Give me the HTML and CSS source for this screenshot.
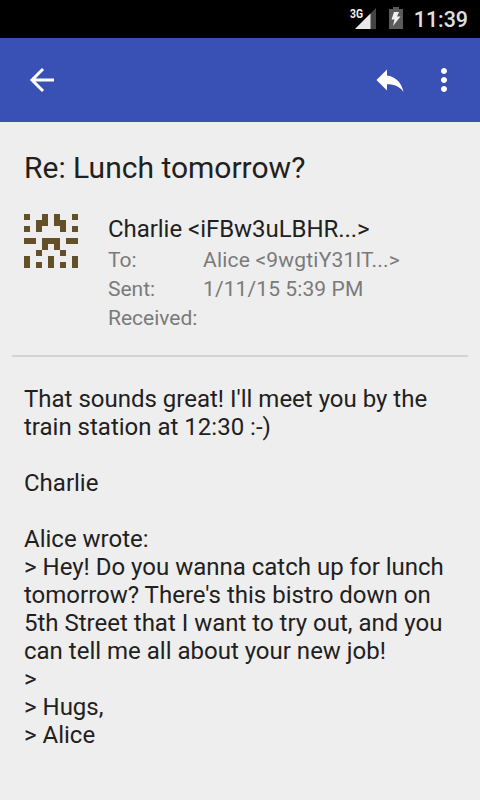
FILE: index.html
```html
<!DOCTYPE html>
<html lang="en">
<head>
    <meta charset="UTF-8">
    <meta name="viewport" content="width=device-width, initial-scale=1.0">
    <title>Re: Lunch tomorrow?</title>
    <link rel="stylesheet" href="styles.css">
</head>
<body>
    <div class="status-bar">
        <svg class="signal" width="28" height="24" viewBox="0 0 28 24">
            <path d="M27 1V22H6z" fill="#444"/>
            <path d="M21.500 6.500V22H6z" fill="#e8e8e8"/>
            <text class="network" x="1" y="11" textLength="13" lengthAdjust="spacingAndGlyphs">3G</text>
        </svg>
        <svg class="battery" width="14" height="22" viewBox="0 0 14 22">
            <path d="M4 0h6v2h4v20H0V2h4z" fill="#5a5a5a"/>
            <path d="M5 5h5L8 9.500h3.500L4 19l1.500-6.500H2.500z" fill="#f0f0f0"/>
        </svg>
        <span class="clock">11:39</span>
    </div>
    <header class="toolbar">
        <svg class="back" width="36" height="36" viewBox="0 0 36 36">
            <path d="M31 18H10M20 7L9 18l11 11" fill="none" stroke="#fff" stroke-width="3"/>
        </svg>
        <svg class="reply" width="36" height="36" viewBox="0 0 24 24">
            <path d="M10 9V5l-7 7 7 7v-4.100c5 0 8.500 1.600 11 5.100-1-5-4-10-11-11z" fill="#fff"/>
        </svg>
        <svg class="more" width="36" height="36" viewBox="0 0 24 24">
            <path d="M12 8c1.100 0 2-.9 2-2s-.9-2-2-2-2 .9-2 2 .9 2 2 2zm0 2c-1.100 0-2 .9-2 2s.9 2 2 2 2-.9 2-2-.9-2-2-2zm0 6c-1.100 0-2 .9-2 2s.9 2 2 2 2-.9 2-2-.9-2-2-2z" fill="#fff"/>
        </svg>
    </header>
    <main>
        <h1 class="subject">Re: Lunch tomorrow?</h1>
        <div class="message-info">
            <svg class="avatar" width="54" height="54" viewBox="0 0 9 9" shape-rendering="crispEdges">
                <path fill="#635028" d="M0 0h1v1H0zM3 0h1v2H3zM5 0h1v2H5zM8 0h1v1H8zM2 1h1v2H2zM6 1h1v2H6zM0 2h1v1H0zM8 2h1v1H8zM0 4h2v1H0zM3 4h3v2H5V5H4v1H3zM7 4h2v1H7zM2 6h1v1H2zM6 6h1v1H6zM0 7h1v2H0zM4 7h1v2H4zM8 7h1v2H8zM2 8h1v1H2zM6 8h1v1H6z"/>
            </svg>
            <div class="details">
                <div class="sender">Charlie &lt;iFBw3uLBHR...&gt;</div>
                <dl class="fields">
                    <dt>To:</dt>
                    <dd class="recipient">Alice &lt;9wgtiY31IT...&gt;</dd>
                    <dt>Sent:</dt>
                    <dd>1/11/15 5:39 PM</dd>
                    <dt>Received:</dt>
                    <dd></dd>
                </dl>
            </div>
        </div>
        <hr class="divider">
        <div class="message-body">That sounds great! I'll meet you by the
train station at 12:30 :-)

Charlie

Alice wrote:
&gt; Hey! Do you wanna catch up for lunch
tomorrow? There's this bistro down on
5th Street that I want to try out, and you
can tell me all about your new job!
&gt;
&gt; Hugs,
&gt; Alice</div>
    </main>
</body>
</html>
```

FILE: styles.css
```css
body {
    margin: 0;
    font-family: Roboto, sans-serif;
    background-color: #eee;
    color: #1f2121;
}

svg {
    display: block;
    flex-shrink: 0;
}

.status-bar {
    display: flex;
    justify-content: flex-end;
    align-items: center;
    box-sizing: border-box;
    height: 38px;
    padding-right: 12px;
    background-color: #000;
}

.signal {
    margin-right: 12px;
}

.network {
    font-size: 12px;
    font-weight: 700;
    fill: #f0f0f0;
    stroke: #000;
    stroke-width: 2px;
    paint-order: stroke;
}

.battery {
    margin-top: -2px;
    margin-right: 11px;
}

.clock {
    font-size: 21.4px;
    font-weight: 500;
    line-height: 36px;
    padding-top: 2px;
    color: #e0e0e0;
}

.toolbar {
    display: flex;
    align-items: center;
    box-sizing: border-box;
    height: 84px;
    padding: 0 18px 0 23px;
    background-color: #3951b5;
}

.back {
    margin-right: auto;
}

.reply {
    margin-right: 18px;
}

.subject {
    margin: 0;
    padding: 28px 24px 0;
    font-size: 30px;
    font-weight: 400;
    line-height: 36px;
}

.message-info {
    display: flex;
    gap: 30px;
    padding: 28px 24px 0;
}

.sender {
    padding-top: 1px;
    font-size: 24px;
    line-height: 28px;
    letter-spacing: -0.05px;
}

.fields {
    display: grid;
    grid-template-columns: 95px auto;
    grid-auto-rows: 29px;
    margin: 3px 0 0;
    font-size: 21px;
    line-height: 29px;
    color: #7a7a7a;
}

.fields dd {
    margin: 0;
    letter-spacing: 0.1px;
}

.fields .recipient {
    letter-spacing: 0.2px;
}

.divider {
    height: 2px;
    margin: 22px 12px 0;
    border: none;
    background-color: #d2d4d3;
}

.message-body {
    padding: 28px 24px 0;
    font-size: 24px;
    line-height: 28px;
    white-space: pre;
}
```
